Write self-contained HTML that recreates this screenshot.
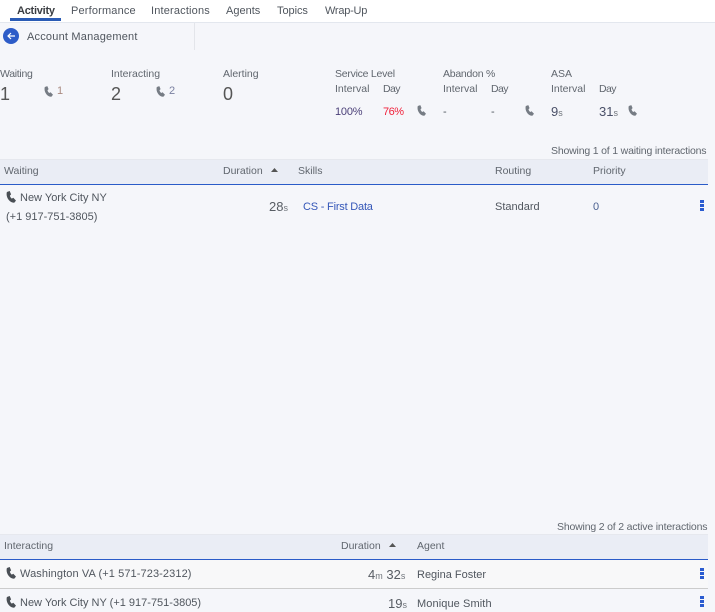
<!DOCTYPE html>
<html><head><meta charset="utf-8">
<style>
html,body{margin:0;padding:0}
body{width:715px;height:611px;overflow:hidden;background:#f5f6fa;position:relative;font-family:"Liberation Sans",sans-serif;font-size:11px;color:#50565e}
.t{position:absolute;white-space:nowrap;line-height:14px}
.b{position:absolute}
.h{color:#60666e;font-size:10.5px}
.big{font-size:18px;line-height:20px;color:#555}
.s{font-size:9px;color:#70757c}
.blue{color:#3557b8;letter-spacing:-.2px}
.day{letter-spacing:-.6px}
.show{letter-spacing:-.18px}
.n{font-size:13px;color:#585d64}
svg{position:absolute}
.dot{position:absolute;width:4px;height:3px;background:#2a5bd0;left:700px}
</style></head><body>
<svg width="0" height="0" style="position:absolute"><defs><symbol id="p" viewBox="0 0 10 12"><path d="M.9 1 L3.7 0 L5.1 3.4 L3.9 4.6 C4.1 5.8 4.8 6.8 5.8 7.6 L7.3 6.8 L10 9.6 L8.2 11.8 C3.5 12 -.6 6 .9 1Z" fill="currentColor"/></symbol></defs></svg>

<div class="b" style="left:0;top:0;width:715px;height:22px;background:#fff;border-bottom:1px solid #e3e7ee"></div>
<div class="b" style="left:10px;top:18px;width:51px;height:3px;background:#2a5bb5"></div>
<div class="t" style="left:17px;top:4px;font-weight:bold;color:#3a3d42;letter-spacing:-.25px">Activity</div>
<div class="t" style="left:71px;top:4px;letter-spacing:.17px">Performance</div>
<div class="t" style="left:151px;top:4px;letter-spacing:.17px">Interactions</div>
<div class="t" style="left:226px;top:4px">Agents</div>
<div class="t" style="left:277px;top:4px;letter-spacing:-.05px">Topics</div>
<div class="t" style="left:325px;top:4px;letter-spacing:-.25px">Wrap-Up</div>

<div class="b" style="left:194px;top:23px;width:1px;height:27px;background:#e3e5ea"></div>
<div class="b" style="left:3px;top:28px;width:16px;height:16px;border-radius:50%;background:#2d5cc8"></div>
<svg style="left:3px;top:28px" width="16" height="16" viewBox="0 0 16 16"><path d="M12 8H5M8 5 L5 8 L8 11" fill="none" stroke="#fff" stroke-width="1.2"/></svg>
<div class="t" style="left:27px;top:30px;letter-spacing:.2px">Account Management</div>

<div class="t h" style="left:0;top:67px;letter-spacing:-.3px">Waiting</div>
<div class="t big" style="left:0;top:84px">1</div>
<svg style="left:44px;top:86px;color:#767c84" width="9" height="11"><use href="#p"/></svg>
<div class="t" style="left:57px;top:84px;color:#a98a80">1</div>
<div class="t h" style="left:111px;top:67px">Interacting</div>
<div class="t big" style="left:111px;top:84px">2</div>
<svg style="left:156px;top:86px;color:#767c84" width="9" height="11"><use href="#p"/></svg>
<div class="t" style="left:169px;top:84px;color:#7a80a0">2</div>
<div class="t h" style="left:223px;top:67px">Alerting</div>
<div class="t big" style="left:223px;top:84px">0</div>

<div class="t h" style="left:335px;top:67px;letter-spacing:-.25px">Service Level</div>
<div class="t h" style="left:335px;top:82px">Interval</div>
<div class="t h day" style="left:383px;top:82px">Day</div>
<div class="t" style="left:335px;top:105px;color:#4a3f78;letter-spacing:-.2px">100%</div>
<div class="t" style="left:383px;top:105px;color:#f0203a;letter-spacing:-.5px">76%</div>
<svg style="left:417px;top:105px;color:#767c84" width="9" height="11"><use href="#p"/></svg>
<div class="t h" style="left:443px;top:67px;letter-spacing:-.25px">Abandon %</div>
<div class="t h" style="left:443px;top:82px">Interval</div>
<div class="t h day" style="left:491px;top:82px">Day</div>
<div class="t" style="left:443px;top:105px">-</div>
<div class="t" style="left:491px;top:105px">-</div>
<svg style="left:525px;top:105px;color:#767c84" width="9" height="11"><use href="#p"/></svg>
<div class="t h" style="left:551px;top:67px">ASA</div>
<div class="t h" style="left:551px;top:82px">Interval</div>
<div class="t h day" style="left:599px;top:82px">Day</div>
<div class="t n" style="left:551px;top:105px;color:#4a5068">9<span class="s">s</span></div>
<div class="t n" style="left:599px;top:105px;color:#4a5068">31<span class="s">s</span></div>
<svg style="left:628px;top:105px;color:#767c84" width="9" height="11"><use href="#p"/></svg>

<div class="t h show" style="left:551px;top:144px">Showing 1 of 1 waiting interactions</div>

<div class="b" style="left:0;top:159px;width:708px;height:24px;background:#eaedf5;border-top:1px solid #e6e8ee;border-bottom:1px solid #2a5bc8"></div>
<div class="t h" style="left:4px;top:164px">Waiting</div>
<div class="t h" style="left:223px;top:164px">Duration</div>
<svg style="left:271px;top:168px" width="7" height="5"><path d="M0 4L3.5 0L7 4Z" fill="#555"/></svg>
<div class="t h" style="left:298px;top:164px">Skills</div>
<div class="t h" style="left:495px;top:164px">Routing</div>
<div class="t h" style="left:593px;top:164px">Priority</div>

<svg style="left:6px;top:191px;color:#4a4f55" width="10" height="12"><use href="#p"/></svg>
<div class="t" style="left:20px;top:191px">New York City NY</div>
<div class="t" style="left:6px;top:210px">(+1 917-751-3805)</div>
<div class="t n" style="left:269px;top:200px">28<span class="s">s</span></div>
<div class="t blue" style="left:303px;top:200px">CS - First Data</div>
<div class="t" style="left:495px;top:200px">Standard</div>
<div class="t" style="left:593px;top:200px;color:#4a6090">0</div>
<div class="dot" style="top:200px"></div><div class="dot" style="top:204px"></div><div class="dot" style="top:208px"></div>

<div class="t h show" style="left:557px;top:520px">Showing 2 of 2 active interactions</div>

<div class="b" style="left:0;top:534px;width:708px;height:24px;background:#eaedf5;border-top:1px solid #e6e8ee;border-bottom:1px solid #2a5bc8"></div>
<div class="t h" style="left:4px;top:539px">Interacting</div>
<div class="t h" style="left:341px;top:539px">Duration</div>
<svg style="left:389px;top:543px" width="7" height="5"><path d="M0 4L3.5 0L7 4Z" fill="#555"/></svg>
<div class="t h" style="left:417px;top:539px">Agent</div>

<div class="b" style="left:0;top:560px;width:708px;height:28px;background:#f8f8f9;border-bottom:1px solid #ccc"></div>
<svg style="left:6px;top:567px;color:#4a4f55" width="10" height="12"><use href="#p"/></svg>
<div class="t" style="left:20px;top:567px;letter-spacing:.1px">Washington VA (+1 571-723-2312)</div>
<div class="t n" style="left:368px;top:568px">4<span class="s">m</span> 32<span class="s">s</span></div>
<div class="t" style="left:417px;top:568px">Regina Foster</div>
<div class="dot" style="top:568px"></div><div class="dot" style="top:572px"></div><div class="dot" style="top:576px"></div>

<svg style="left:6px;top:596px;color:#4a4f55" width="10" height="12"><use href="#p"/></svg>
<div class="t" style="left:20px;top:596px">New York City NY (+1 917-751-3805)</div>
<div class="t n" style="left:388px;top:597px">19<span class="s">s</span></div>
<div class="t" style="left:417px;top:597px;letter-spacing:.1px">Monique Smith</div>
<div class="dot" style="top:596px"></div><div class="dot" style="top:600px"></div><div class="dot" style="top:604px"></div>
</body></html>
